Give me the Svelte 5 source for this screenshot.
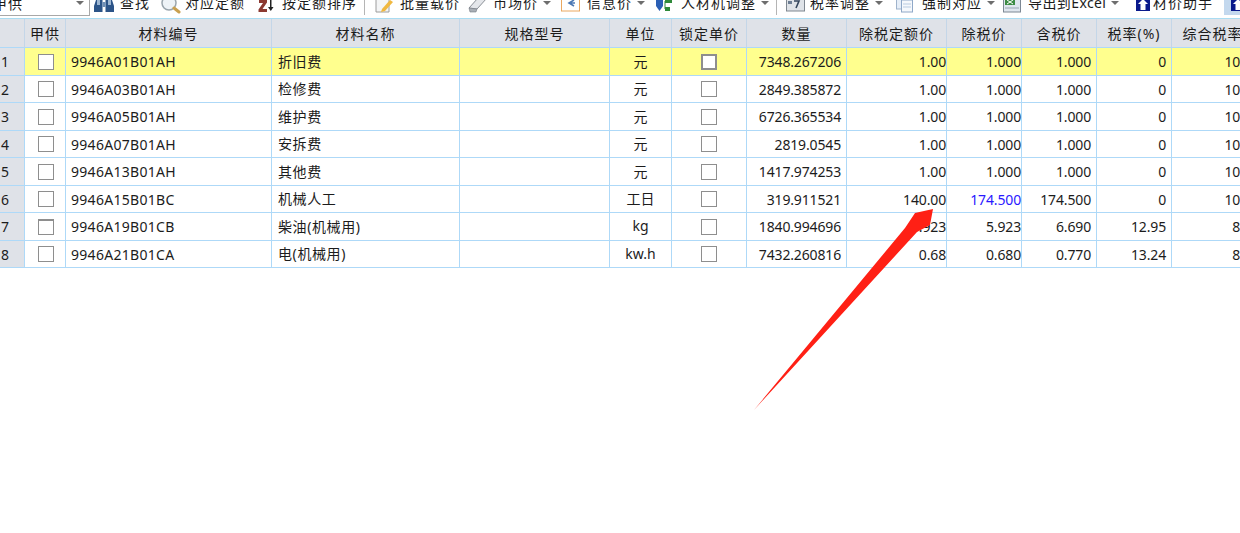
<script lang="ts">
type ToolItem = { id: string; label: string; width: number; slot: number; caret?: boolean };
type Row = { code: string; name: string; unit: string; qty: string; quota: string; net: string; gross: string; tax: string; rate: string };

const tools: ToolItem[] = [
	{ id: 'find', label: '查找', width: 67, slot: 26 },
	{ id: 'match', label: '对应定额', width: 97, slot: 24 },
	{ id: 'sort', label: '按定额排序', width: 106, slot: 24 },
	{ id: 'sep', label: '', width: 10, slot: 0 },
	{ id: 'batch', label: '批量载价', width: 94, slot: 26 },
	{ id: 'market', label: '市场价', width: 93, slot: 25, caret: true },
	{ id: 'info', label: '信息价', width: 94, slot: 26, caret: true },
	{ id: 'adjust', label: '人材机调整', width: 121, slot: 26, caret: true },
	{ id: 'sep', label: '', width: 10, slot: 0 },
	{ id: 'rate', label: '税率调整', width: 110, slot: 24, caret: true },
	{ id: 'force', label: '强制对应', width: 106, slot: 26, caret: true },
	{ id: 'excel', label: '导出到Excel', width: 134, slot: 26, caret: true },
	{ id: 'helper', label: '材价助手', width: 88, slot: 17 }
];

const rows: Row[] = [
	{ code: '9946A01B01AH', name: '折旧费', unit: '元', qty: '7348.267206', quota: '1.00', net: '1.000', gross: '1.000', tax: '0', rate: '100' },
	{ code: '9946A03B01AH', name: '检修费', unit: '元', qty: '2849.385872', quota: '1.00', net: '1.000', gross: '1.000', tax: '0', rate: '100' },
	{ code: '9946A05B01AH', name: '维护费', unit: '元', qty: '6726.365534', quota: '1.00', net: '1.000', gross: '1.000', tax: '0', rate: '100' },
	{ code: '9946A07B01AH', name: '安拆费', unit: '元', qty: '2819.0545', quota: '1.00', net: '1.000', gross: '1.000', tax: '0', rate: '100' },
	{ code: '9946A13B01AH', name: '其他费', unit: '元', qty: '1417.974253', quota: '1.00', net: '1.000', gross: '1.000', tax: '0', rate: '100' },
	{ code: '9946A15B01BC', name: '机械人工', unit: '工日', qty: '319.911521', quota: '140.00', net: '174.500', gross: '174.500', tax: '0', rate: '100' },
	{ code: '9946A19B01CB', name: '柴油(机械用)', unit: 'kg', qty: '1840.994696', quota: '5.923', net: '5.923', gross: '6.690', tax: '12.95', rate: '88' },
	{ code: '9946A21B01CA', name: '电(机械用)', unit: 'kw.h', qty: '7432.260816', quota: '0.68', net: '0.680', gross: '0.770', tax: '13.24', rate: '88' }
];
</script>

{#snippet upArrow()}
	<svg class="icon" width="16" height="18" viewBox="0 0 16 18">
		<rect x="0" y="-4" width="14" height="15" fill="#0a1a8c" />
		<path d="M7 -1 L12 4 H9.5 V10 H4.5 V4 H2 Z" fill="#fff" />
	</svg>
{/snippet}

{#snippet toolIcon(id: string)}
	{#if id === 'find'}
		<svg class="icon" width="20" height="18" viewBox="0 0 20 18">
			<path d="M0 6 L2 0 H8.5 V12 H0 Z M11.5 0 H18 L20 6 V12 H11.5 Z" fill="#2c5488" />
			<rect x="8.5" y="2" width="3" height="5" fill="#6f8fb5" />
			<rect x="3" y="0" width="3" height="5" fill="#9db6d2" />
			<rect x="14" y="0" width="3" height="5" fill="#9db6d2" />
		</svg>
	{:else if id === 'match'}
		<svg class="icon" width="20" height="18" viewBox="0 0 20 18">
			<circle cx="8" cy="3" r="7" fill="#eef3f7" stroke="#9aa5ad" stroke-width="1.5" />
			<path d="M13 8 L18 12" stroke="#c9a050" stroke-width="3" stroke-linecap="round" />
		</svg>
	{:else if id === 'sort'}
		<svg class="icon" width="18" height="18" viewBox="0 0 18 18">
			<path d="M1 0 H9 V2.5 L4.5 9 H9 V12 H0.5 V9.5 L5 3 H1 Z" fill="#8c3a32" />
			<path d="M12 0 H13.5 V7 H15.5 L12.8 11 L10 7 H12 Z" fill="#222" />
		</svg>
	{:else if id === 'batch'}
		<svg class="icon" width="20" height="18" viewBox="0 0 20 18">
			<path d="M2 -2 H15 V12 H2 Z" fill="#f4f5f6" stroke="#9c9c9c" />
			<path d="M8 9 L16 0 L19 2 L11 11 L7 12 Z" fill="#f0b840" />
		</svg>
	{:else if id === 'market'}
		<svg class="icon" width="20" height="18" viewBox="0 0 20 18">
			<path d="M1 8 L10 -2 H19 L9 9 Z" fill="#e4e6ea" stroke="#8a8f96" />
			<path d="M1 8 L9 9 L8 12 H2 Z" fill="#a9aeb5" stroke="#777c84" stroke-width=".6" />
		</svg>
	{:else if id === 'info'}
		<svg class="icon" width="20" height="18" viewBox="0 0 20 18">
			<rect x="0.5" y="-2" width="18" height="13" fill="#fff" stroke="#eaa860" />
			<path d="M13 0 L8 3 L13 6 M9 3 H14" stroke="#4d79b5" stroke-width="1.6" fill="none" />
		</svg>
	{:else if id === 'adjust'}
		<svg class="icon" width="18" height="18" viewBox="0 0 18 18">
			<path d="M1 0 H8 V6 L4.5 11 L1 6 Z" fill="#2b5fb5" />
			<rect x="10" y="0" width="7" height="3" fill="#2f8a3a" />
			<rect x="10" y="7" width="5" height="4" fill="#2f8a3a" />
			<path d="M10 1 V9" stroke="#2f8a3a" />
		</svg>
	{:else if id === 'rate'}
		<svg class="icon" width="19" height="18" viewBox="0 0 19 18">
			<rect x="0.5" y="-2" width="18" height="13" fill="#dfe3e8" stroke="#7f8790" />
			<path d="M8 1 H13 L10 8" stroke="#34455c" stroke-width="1.6" fill="none" />
			<rect x="2" y="1" width="4" height="3" fill="#6c7d93" />
		</svg>
	{:else if id === 'force'}
		<svg class="icon" width="18" height="18" viewBox="0 0 18 18">
			<rect x="0.5" y="-2" width="8" height="11" fill="#e6eef8" stroke="#9fb3cc" />
			<rect x="5.5" y="0" width="11" height="12" fill="#f5f8fc" stroke="#8fa8c8" />
			<path d="M7 4 H15 M7 7 H15" stroke="#b9cbe0" />
		</svg>
	{:else if id === 'excel'}
		<svg class="icon" width="20" height="18" viewBox="0 0 20 18">
			<rect x="1.5" y="-2" width="17" height="14" fill="#dfe6ee" stroke="#7d8894" />
			<rect x="3" y="0" width="10" height="5" fill="#3d8c45" />
			<path d="M5 0 L11 4 M11 0 L5 4" stroke="#fff" />
			<path d="M3 8 H17" stroke="#9aa6b3" />
		</svg>
	{:else if id === 'helper'}
		{@render upArrow()}
	{/if}
{/snippet}

<div class="page">
	<div class="toolbar">
		<div class="combo"><span class="combo__text">甲供</span><span class="caret combo__caret"></span></div>
		<div class="tools">
			{#each tools as tool}
				{#if tool.id === 'sep'}
					<span class="sep" style:width="{tool.width}px"></span>
				{:else}
					<div class="tool" style:width="{tool.width}px">
						<span class="tool__slot" style:width="{tool.slot}px">{@render toolIcon(tool.id)}</span>
						<span class="tool__label" class:tool__label--tight={tool.id === 'excel'}>{tool.label}</span>
						{#if tool.caret}<span class="caret"></span>{/if}
					</div>
				{/if}
			{/each}
			<div class="tool tool--active">{@render upArrow()}</div>
		</div>
	</div>

	<table class="grid">
		<colgroup>
			<col class="c-no" /><col class="c-supply" /><col class="c-code" /><col class="c-name" />
			<col class="c-spec" /><col class="c-unit" /><col class="c-lock" /><col class="c-qty" />
			<col class="c-quota" /><col class="c-price" /><col class="c-price" /><col class="c-price" /><col class="c-rate" />
		</colgroup>
		<thead>
			<tr>
				<th></th>
				<th>甲供</th>
				<th>材料编号</th>
				<th>材料名称</th>
				<th>规格型号</th>
				<th>单位</th>
				<th>锁定单价</th>
				<th>数量</th>
				<th>除税定额价</th>
				<th>除税价</th>
				<th>含税价</th>
				<th>税率(%)</th>
				<th>综合税率</th>
			</tr>
		</thead>
		<tbody>
			{#each rows as row, i}
				<tr class:current={i === 0}>
					<td class="no">{i + 1}</td>
					<td class="check check--supply"><span class="box" class:box--top={i === 6}></span></td>
					<td class="text code">{row.code}</td>
					<td class="name">{row.name}</td>
					<td></td>
					<td class="unit">{row.unit}</td>
					<td class="check"><span class="box" class:box--strong={i === 0}></span></td>
					<td class="num">{row.qty}</td>
					<td class="num flush">{row.quota}</td>
					<td class="num flush" class:edited={i === 5}>{row.net}</td>
					<td class="num">{row.gross}</td>
					<td class="num">{row.tax}</td>
					<td class="num">{row.rate}</td>
				</tr>
			{/each}
		</tbody>
	</table>

	<svg class="pointer" width="1240" height="533" viewBox="0 0 1240 533">
		<polygon points="754,410 905,228 915,213 933,209 930,225 917,232" fill="#ff2015" />
	</svg>
</div>

<style>
	:global(body) {
		margin: 0;
		background: #fff;
	}

	.page {
		position: relative;
		width: 1240px;
		height: 533px;
		overflow: hidden;
		background: #fff;
		color: #1c1c1c;
		font-family: 'Noto Sans', 'Noto Sans CJK SC', sans-serif;
		font-size: 14px;
	}

	.toolbar {
		display: flex;
		align-items: flex-start;
		height: 18px;
		overflow: hidden;
		border-bottom: 1px solid #a9dcf2;
		box-sizing: content-box;
	}

	.combo {
		display: flex;
		align-items: center;
		flex: none;
		box-sizing: border-box;
		width: 90px;
		height: 16px;
		overflow: hidden;
		border-right: 1px solid #a8a8a8;
		border-bottom: 1px solid #a8a8a8;
	}

	.combo__text {
		margin-left: -7px;
		margin-top: -10px;
		letter-spacing: 1px;
		white-space: nowrap;
	}

	.combo .combo__caret {
		margin: -10px 0 0 53px;
	}

	.tools {
		display: flex;
		margin: -9px 0 0 4px;
		height: 24px;
		flex: none;
	}

	.tool {
		display: flex;
		align-items: center;
		flex: none;
		height: 24px;
		white-space: nowrap;
	}

	.tool__slot {
		display: flex;
		flex: none;
		align-items: center;
		height: 24px;
	}

	.icon {
		display: block;
		flex: none;
		margin-top: 12px;
	}

	.tool__label {
		letter-spacing: 1px;
		line-height: 24px;
	}

	.tool__label--tight {
		letter-spacing: 0.4px;
	}

	.tool--active {
		width: 40px;
		background: #c3d8ee;
		padding-left: 7px;
	}

	.sep {
		flex: none;
		height: 24px;
		box-sizing: border-box;
		border-left: 1px solid #b5b5b5;
	}

	.caret {
		flex: none;
		width: 0;
		height: 0;
		margin-left: 5px;
		border-left: 4px solid transparent;
		border-right: 4px solid transparent;
		border-top: 4px solid #6e6e6e;
	}

	.grid {
		table-layout: fixed;
		width: 1254px;
		border-collapse: separate;
		border-spacing: 0;
	}

	.c-no { width: 25px; }
	.c-supply { width: 41px; }
	.c-code { width: 206px; }
	.c-name { width: 188px; }
	.c-spec { width: 150px; }
	.c-unit { width: 62px; }
	.c-lock { width: 75px; }
	.c-qty { width: 100px; }
	.c-quota { width: 100px; }
	.c-price { width: 75px; }
	.c-rate { width: 82px; }

	th {
		height: 29px;
		box-sizing: border-box;
		padding: 0;
		background: #dfe2e8;
		border-right: 1px solid #c4d6e8;
		border-bottom: 1px solid #aed9f8;
		font-weight: 400;
		letter-spacing: 1px;
		white-space: nowrap;
		text-align: center;
	}

	td {
		box-sizing: border-box;
		padding: 0;
		border-right: 1px solid #aed9f8;
		border-bottom: 1px solid #aed9f8;
		white-space: nowrap;
	}

	tbody tr:nth-child(odd) td {
		height: 28px;
	}

	tbody tr:nth-child(even) td {
		height: 27px;
	}

	tr.current td {
		background: #ffff8e;
	}

	tbody tr td.no {
		background: #dfe2e8;
		padding-left: 1px;
	}

	.check {
		text-align: center;
		line-height: 0;
	}

	td.check--supply {
		padding-left: 1px;
	}

	.box {
		display: inline-block;
		box-sizing: border-box;
		width: 16px;
		height: 16px;
		background: #fff;
		border: 1px solid #8e8e8e;
	}

	.box--strong {
		border-width: 2px;
	}

	.box--top {
		border-top-width: 2px;
	}

	.text {
		padding-left: 5px;
	}

	.code {
		letter-spacing: 0.3px;
	}

	td.name {
		padding: 0 0 2px 6px;
		letter-spacing: 0.6px;
	}

	td.unit {
		padding-bottom: 2px;
		text-align: center;
	}

	.num {
		padding-right: 5px;
		letter-spacing: -0.15px;
		text-align: right;
	}

	.num.flush {
		padding-right: 0;
	}

	.edited {
		color: #2a1aff;
	}

	.pointer {
		position: absolute;
		top: 0;
		left: 0;
		pointer-events: none;
	}
</style>
